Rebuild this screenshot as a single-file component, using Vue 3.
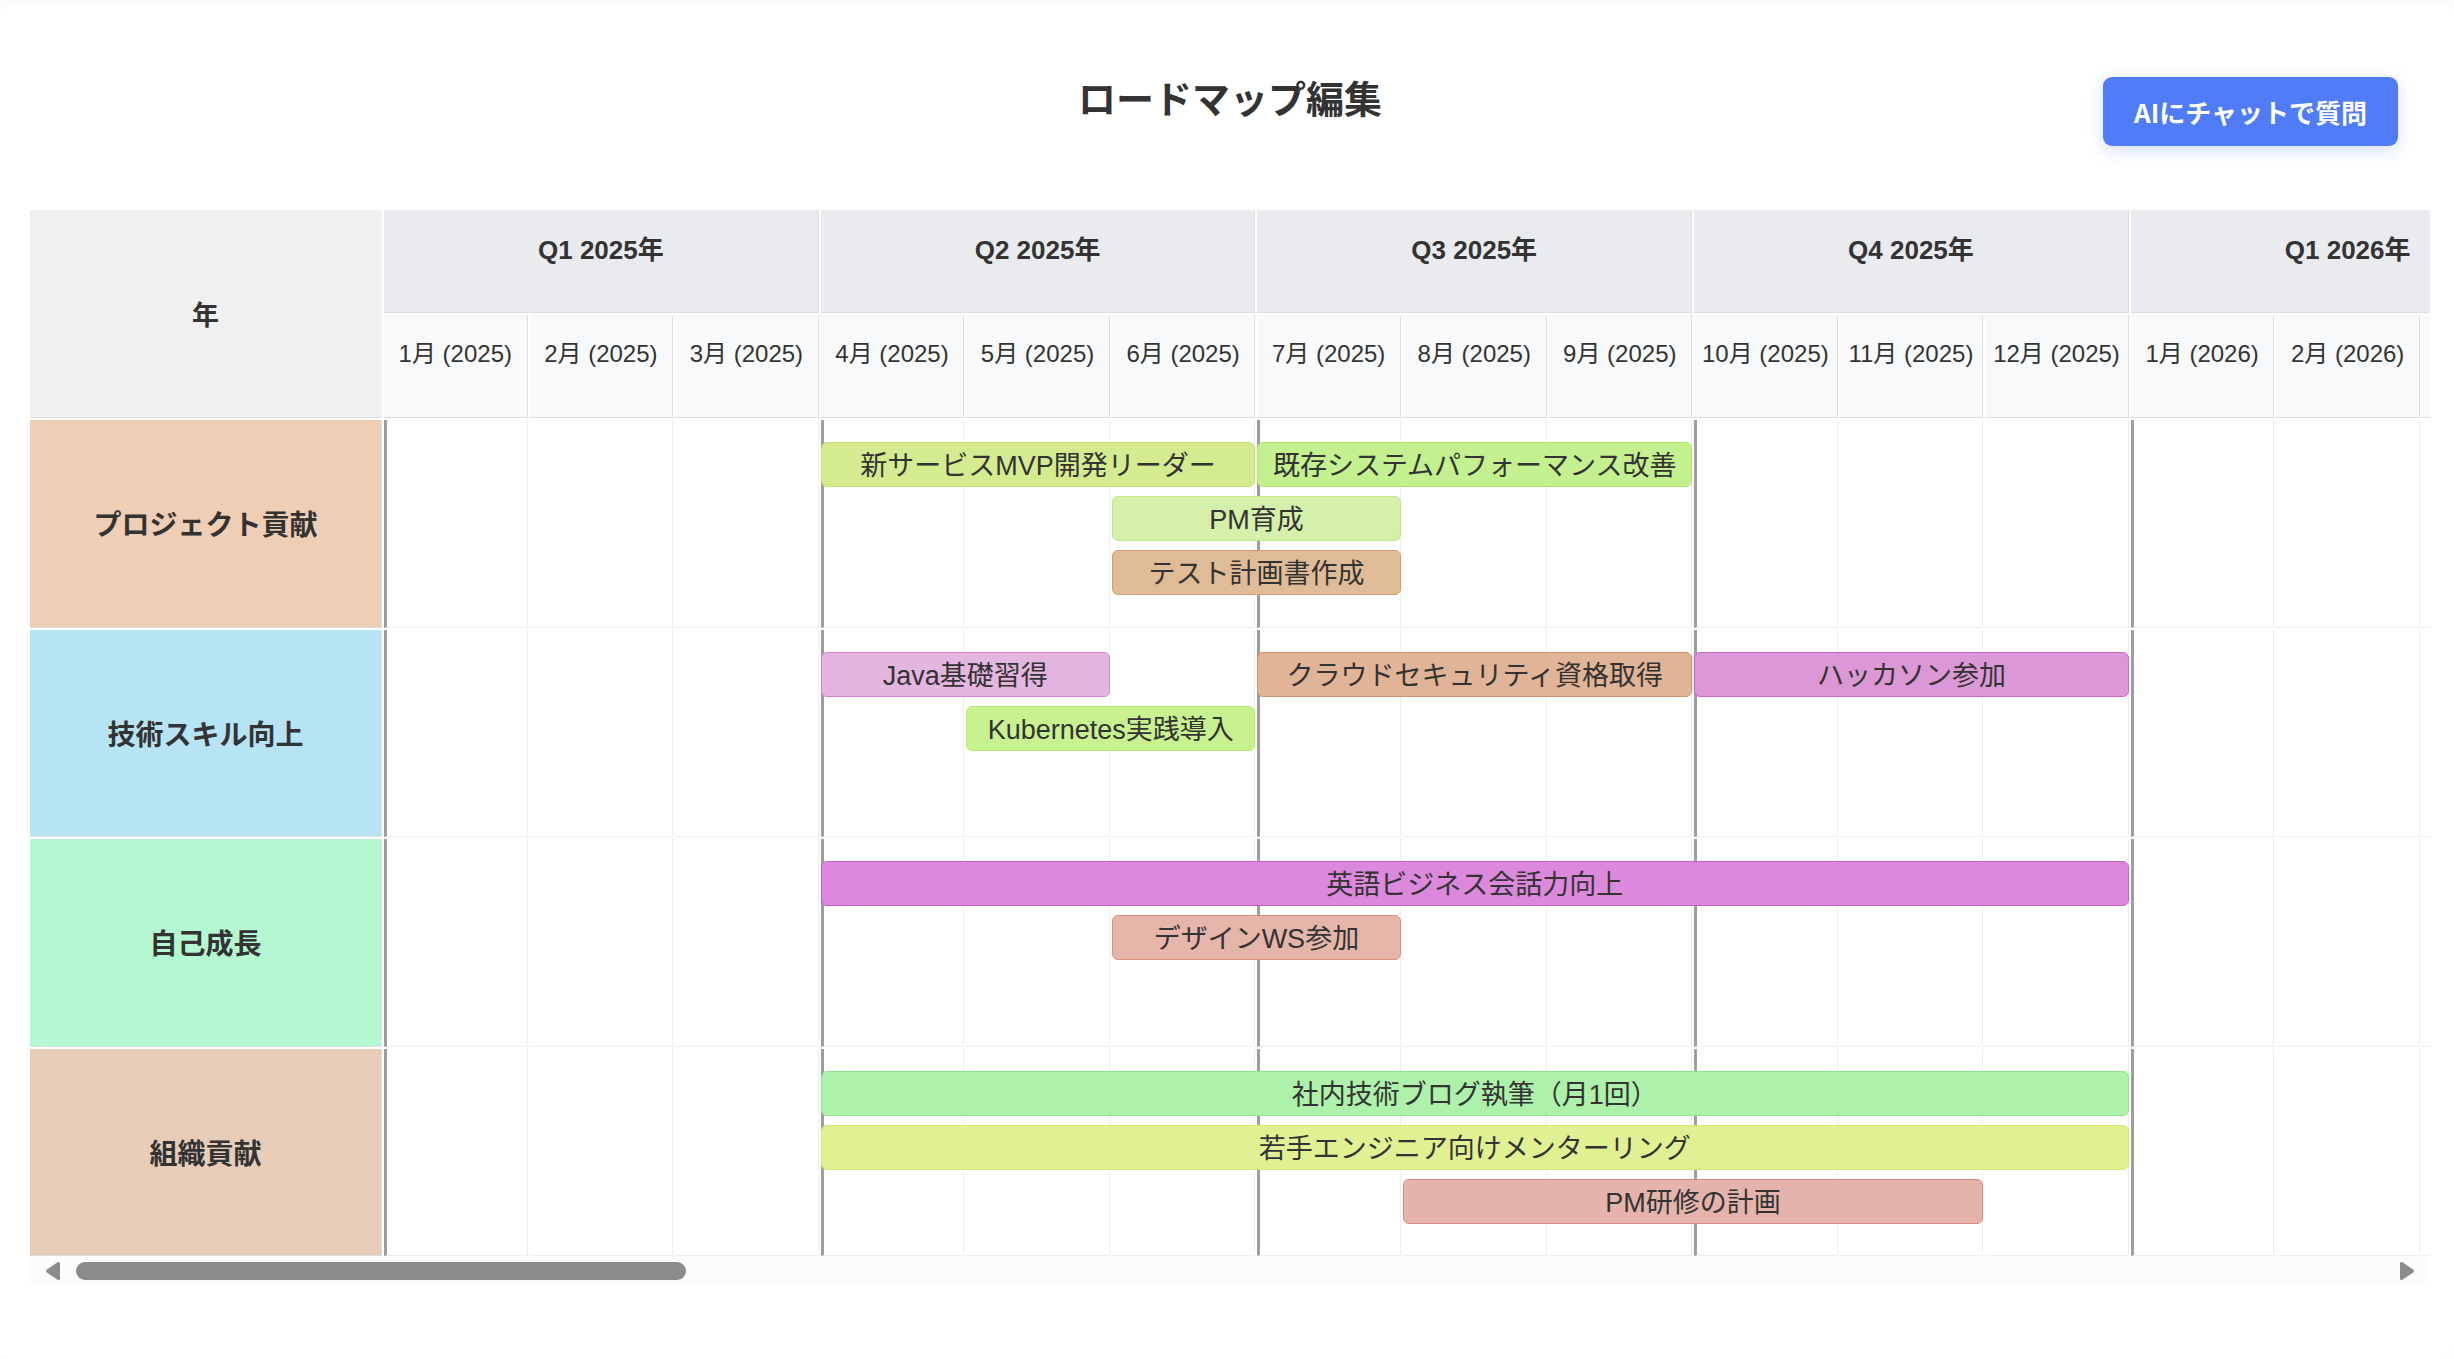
<script setup>
import { ref, computed, onMounted, onBeforeUnmount } from 'vue'

const START_YEAR = 2025
const YEARS = 5
const LABEL_WIDTH = 354

const quarters = []
const months = []
for (let y = 0; y < YEARS; y++) {
  for (let m = 0; m < 12; m++) {
    const index = y * 12 + m
    months.push({ index, text: `${m + 1}月 (${START_YEAR + y})` })
    if (m % 3 === 0) quarters.push({ index, text: `Q${m / 3 + 1} ${START_YEAR + y}年` })
  }
}

// start: zero-based month index, span: number of months, lane: row inside the category
const categories = [
  {
    name: 'プロジェクト貢献',
    color: '#efceb6',
    tasks: [
      { name: '新サービスMVP開発リーダー', start: 3, span: 3, lane: 1, fill: '#d4eb8f', edge: '#c5e26b' },
      { name: '既存システムパフォーマンス改善', start: 6, span: 3, lane: 1, fill: '#c4f08f', edge: '#aee866' },
      { name: 'PM育成', start: 5, span: 2, lane: 2, fill: '#d5f0ab', edge: '#bfe985' },
      { name: 'テスト計画書作成', start: 5, span: 2, lane: 3, fill: '#dfbb97', edge: '#d09d6b' }
    ]
  },
  {
    name: '技術スキル向上',
    color: '#b6e4f5',
    tasks: [
      { name: 'Java基礎習得', start: 3, span: 2, lane: 1, fill: '#e3b5df', edge: '#d585cf' },
      { name: 'Kubernetes実践導入', start: 4, span: 2, lane: 2, fill: '#c8f290', edge: '#b5eb69' },
      { name: 'クラウドセキュリティ資格取得', start: 6, span: 3, lane: 1, fill: '#e1b497', edge: '#d49168' },
      { name: 'ハッカソン参加', start: 9, span: 3, lane: 1, fill: '#dc98d6', edge: '#cd66c4' }
    ]
  },
  {
    name: '自己成長',
    color: '#b4f8d1',
    tasks: [
      { name: '英語ビジネス会話力向上', start: 3, span: 9, lane: 1, fill: '#db88dd', edge: '#c75fca' },
      { name: 'デザインWS参加', start: 5, span: 2, lane: 2, fill: '#e6b5aa', edge: '#db8e7b' }
    ]
  },
  {
    name: '組織貢献',
    color: '#e7ccb7',
    tasks: [
      { name: '社内技術ブログ執筆（月1回）', start: 3, span: 9, lane: 1, fill: '#adf1aa', edge: '#8be788' },
      { name: '若手エンジニア向けメンターリング', start: 3, span: 9, lane: 2, fill: '#e0f092', edge: '#d4e86c' },
      { name: 'PM研修の計画', start: 7, span: 4, lane: 3, fill: '#e5b3ac', edge: '#da897f' }
    ]
  }
]

const viewport = ref(null)
const metrics = ref({ left: 0, visible: 1, total: 1 })

function measure() {
  const el = viewport.value
  if (el) metrics.value = { left: el.scrollLeft, visible: el.clientWidth, total: el.scrollWidth }
}
function scrollByMonths(count) {
  viewport.value.scrollBy({ left: count * 146, behavior: 'smooth' })
}
const thumbStyle = computed(() => ({
  width: `${(metrics.value.visible / metrics.value.total) * 100}%`,
  marginLeft: `${(metrics.value.left / metrics.value.total) * 100}%`
}))

// Only the columns inside the viewport are rendered
const range = computed(() => {
  const { left, visible, total } = metrics.value
  const pitch = Math.max(1, (total - LABEL_WIDTH) / months.length)
  return { from: Math.floor(left / pitch), to: Math.floor((left + visible - LABEL_WIDTH) / pitch) }
})
const shownMonths = computed(() =>
  months.filter((m) => m.index >= range.value.from && m.index <= range.value.to)
)
const shownQuarters = computed(() =>
  quarters.filter((q) => q.index + 2 >= range.value.from && q.index <= range.value.to)
)

onMounted(() => {
  measure()
  window.addEventListener('resize', measure)
})
onBeforeUnmount(() => window.removeEventListener('resize', measure))
</script>

<template>
  <main class="card">
    <header class="top">
      <h1>ロードマップ編集</h1>
      <button type="button" class="ask">AIにチャットで質問</button>
    </header>

    <div ref="viewport" class="viewport" @scroll="measure">
      <div class="chart">
        <div class="label corner">年</div>
        <div
          v-for="q in shownQuarters"
          :key="q.text"
          class="head quarter"
          :style="{ gridColumn: `${q.index + 2} / span 3` }"
        >{{ q.text }}</div>
        <div
          v-for="m in shownMonths"
          :key="m.text"
          class="head month"
          :style="{ gridColumn: m.index + 2 }"
        >{{ m.text }}</div>

        <template v-for="(cat, r) in categories" :key="cat.name">
          <div class="label" :style="{ gridRow: r + 3, background: cat.color }">{{ cat.name }}</div>
          <div
            v-for="m in shownMonths"
            :key="m.text"
            class="cell"
            :class="{ first: m.index % 3 === 0 }"
            :style="{ gridRow: r + 3, gridColumn: m.index + 2 }"
          ></div>
          <div class="lanes" :style="{ gridRow: r + 3 }">
            <div
              v-for="t in cat.tasks"
              :key="t.name"
              class="task"
              :style="{
                gridColumn: `${t.start + 1} / span ${t.span}`,
                gridRow: t.lane,
                background: t.fill,
                borderColor: t.edge
              }"
            >{{ t.name }}</div>
          </div>
        </template>
      </div>
    </div>

    <div class="scrollbar">
      <button type="button" class="arrow" aria-label="左へスクロール" @click="scrollByMonths(-1)">
        <svg width="14" height="18" viewBox="0 0 14 18"><path d="M14 1.5v15c0 1.4-1.7 2-2.8 1L.8 10.6c-1-.9-1-2.3 0-3.2L11.2.5C12.3-.5 14 .1 14 1.5z" /></svg>
      </button>
      <div class="track"><div class="thumb" :style="thumbStyle"></div></div>
      <button type="button" class="arrow right" aria-label="右へスクロール" @click="scrollByMonths(1)">
        <svg width="14" height="18" viewBox="0 0 14 18"><path d="M0 1.5v15c0 1.4 1.7 2 2.8 1l10.4-6.9c1-.9 1-2.3 0-3.2L2.8.5C1.7-.5 0 .1 0 1.5z" /></svg>
      </button>
    </div>
  </main>
</template>

<style>
body {
  margin: 0;
  background: #fcfcfc;
}
</style>

<style scoped>
.card {
  box-sizing: border-box;
  min-height: calc(100vh - 5px);
  margin-top: 5px;
  padding: 72px 24px 0 30px;
  border-radius: 12px;
  background: #fff;
  color: #333;
  font-family: "Liberation Sans", "Noto Sans CJK JP", sans-serif;
}

.top {
  display: grid;
  grid-template-columns: 1fr auto 1fr;
  align-items: start;
  padding: 0 32px 64px;
}
.top h1 {
  grid-column: 2;
  margin: 0;
  font-size: 38px;
  line-height: 46px;
  font-weight: 700;
}
.ask {
  justify-self: end;
  height: 69px;
  padding: 0 31px;
  border: 0;
  border-radius: 9px;
  background: #507cf7;
  box-shadow: 0 4px 16px rgba(80, 124, 247, 0.25);
  color: #fff;
  font-family: "Noto Sans CJK JP", sans-serif;
  font-size: 26px;
  font-weight: 700;
  cursor: pointer;
}

.viewport {
  overflow-x: auto;
  scrollbar-width: none;
}
.chart {
  display: grid;
  grid-template-columns: 352px repeat(60, minmax(0, 1fr));
  grid-template-rows: 103px 103px repeat(4, 1fr);
  gap: 2px;
  width: 9086px;
  height: 1046px;
}

.label {
  position: sticky;
  left: 0;
  z-index: 2;
  grid-column: 1;
  display: flex;
  align-items: center;
  justify-content: center;
  border-right: 1px solid #ddd;
  border-bottom: 1px solid #ddd;
  font-size: 28px;
  font-weight: 700;
}
.corner {
  grid-row: 1 / span 2;
  border-right-color: #f0f0f0;
  background: #f0f0f0;
  font-size: 27px;
}

.head {
  padding-top: 24px;
  border-right: 1px solid #ddd;
  border-bottom: 1px solid #ddd;
  line-height: 30px;
  text-align: center;
  white-space: nowrap;
}
.quarter {
  grid-row: 1;
  background: #eaebef;
  font-size: 26px;
  line-height: 32px;
  font-weight: 700;
}
.month {
  grid-row: 2;
  background: #f8f9fb;
  font-size: 24px;
}

.cell {
  border-right: 1px solid #eee;
  border-bottom: 1px solid #eee;
}
.cell.first {
  border-left: 3px solid #9e9e9e;
}

.lanes {
  z-index: 1;
  grid-column: 2 / -1;
  display: grid;
  grid-template-columns: subgrid;
  grid-auto-rows: 45px;
  row-gap: 9px;
  align-content: start;
  padding-top: 22px;
}
.task {
  display: flex;
  align-items: center;
  justify-content: center;
  padding-top: 3px;
  border: 1px solid;
  border-radius: 6px;
  font-size: 27px;
  line-height: 30px;
  white-space: nowrap;
}

.scrollbar {
  display: flex;
  align-items: center;
  height: 30px;
  background: #fcfcfc;
}
.arrow {
  display: flex;
  align-items: center;
  width: 46px;
  height: 30px;
  padding: 0 16px;
  border: 0;
  background: none;
}
.arrow.right {
  justify-content: flex-end;
}
.arrow svg {
  flex: none;
  fill: #8b8b8b;
}
.track {
  flex: 1;
}
.thumb {
  height: 18px;
  border-radius: 9px;
  background: #8b8b8b;
}
</style>
